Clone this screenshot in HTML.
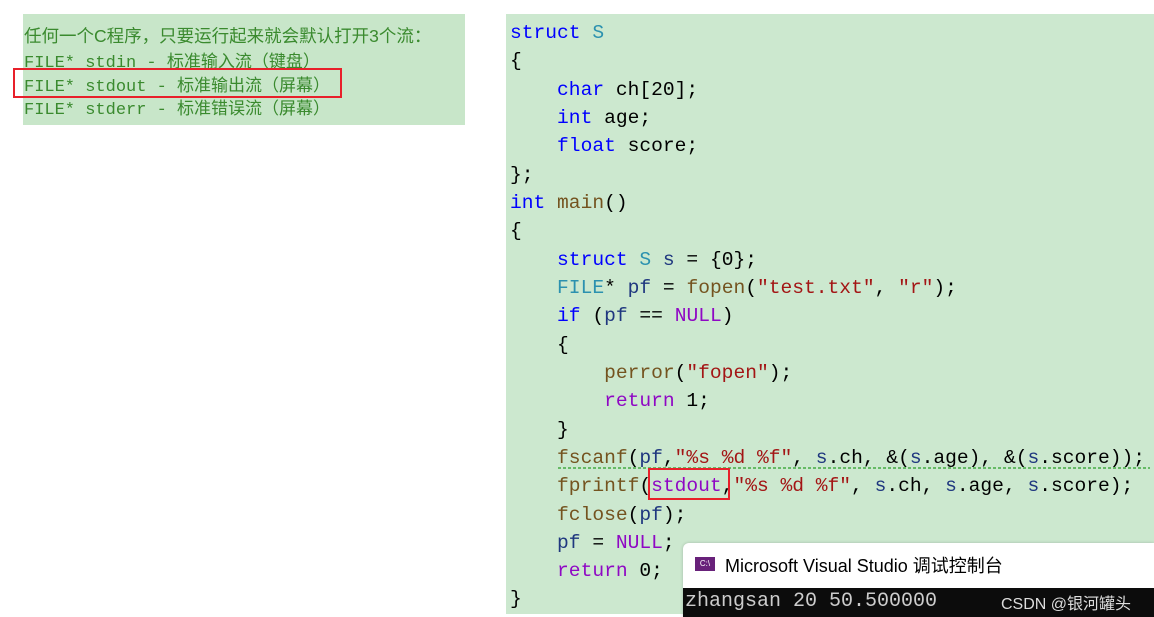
<!DOCTYPE html>
<html><head><meta charset="utf-8"><style>
body{margin:0;width:1154px;height:617px;background:#fff;position:relative;overflow:hidden;font-family:"Liberation Sans","Noto Sans CJK SC",sans-serif}
.note{position:absolute;left:23px;top:14px;width:442px;height:111px;background:#c8e6c9}
.note div{position:absolute;left:1px;font-size:17px;color:#3a8a2e;white-space:pre;font-family:"Liberation Mono","Noto Sans CJK SC",monospace}
.red1{position:absolute;left:13px;top:68px;width:325px;height:26px;border:2px solid #e8202a}
.code{position:absolute;left:506px;top:14px;width:648px;height:600px;background:#cce8cf}
.ln{position:absolute;left:4px;font-family:"Liberation Mono","DejaVu Sans Mono",monospace;font-size:19.6px;white-space:pre;color:#000;line-height:28px}
.k{color:#0000ff}.t{color:#2b91af}.f{color:#74531f}.s{color:#a31515}.v{color:#1f377f}.m{color:#8f08c4}
.box2{position:absolute;left:648px;top:468px;width:78px;height:28px;border:2px solid #e8202a}
.wave{position:absolute;left:558px;top:467px;width:592px;height:2px;background:repeating-linear-gradient(90deg,#4cae4c 0 3px,transparent 3px 5px);opacity:.8}
.con{position:absolute;left:683px;top:543px;width:471px;height:74px;background:#fff;border-top-left-radius:6px;box-shadow:0 0 3px rgba(0,0,0,.2)}
.ico{position:absolute;left:12px;top:14px;width:20px;height:14px;background:#68217a;color:#fff;font-size:8px;line-height:14px;text-align:center}
.ttl{position:absolute;left:42px;top:9px;font-size:18px;color:#000}
.blk{position:absolute;left:0;top:45px;width:471px;height:29px;background:#0c0c0c}
.out{position:absolute;left:2px;top:2px;font-family:"Liberation Mono",monospace;font-size:20px;color:#ccc}
.wm{position:absolute;left:318px;top:2px;font-size:16px;color:#ddd}
</style></head><body>
<div class="note">
<div style="top:9px;font-size:17.5px;font-family:'Liberation Sans','Noto Sans CJK SC',sans-serif">任何一个C程序，只要运行起来就会默认打开3个流：</div>
<div style="top:33px">FILE* stdin - 标准输入流（键盘）</div>
<div style="top:57px">FILE* stdout - 标准输出流（屏幕）</div>
<div style="top:80px">FILE* stderr - 标准错误流（屏幕）</div>
</div>
<div class="red1"></div>
<div class="code">
<div class="ln" style="top:5px"><span class="k">struct</span> <span class="t">S</span></div>
<div class="ln" style="top:33px">{</div>
<div class="ln" style="top:62px">    <span class="k">char</span> ch[20];</div>
<div class="ln" style="top:90px">    <span class="k">int</span> age;</div>
<div class="ln" style="top:118px">    <span class="k">float</span> score;</div>
<div class="ln" style="top:147px">};</div>
<div class="ln" style="top:175px"><span class="k">int</span> <span class="f">main</span>()</div>
<div class="ln" style="top:203px">{</div>
<div class="ln" style="top:232px">    <span class="k">struct</span> <span class="t">S</span> <span class="v">s</span> = {0};</div>
<div class="ln" style="top:260px">    <span class="t">FILE</span>* <span class="v">pf</span> = <span class="f">fopen</span>(<span class="s">"test.txt"</span>, <span class="s">"r"</span>);</div>
<div class="ln" style="top:288px">    <span class="k">if</span> (<span class="v">pf</span> == <span class="m">NULL</span>)</div>
<div class="ln" style="top:317px">    {</div>
<div class="ln" style="top:345px">        <span class="f">perror</span>(<span class="s">"fopen"</span>);</div>
<div class="ln" style="top:373px">        <span class="m">return</span> 1;</div>
<div class="ln" style="top:402px">    }</div>
<div class="ln" style="top:430px">    <span class="f">fscanf</span>(<span class="v">pf</span>,<span class="s">"%s %d %f"</span>, <span class="v">s</span>.ch, &amp;(<span class="v">s</span>.age), &amp;(<span class="v">s</span>.score));</div>
<div class="ln" style="top:458px">    <span class="f">fprintf</span>(<span class="m">stdout</span>,<span class="s">"%s %d %f"</span>, <span class="v">s</span>.ch, <span class="v">s</span>.age, <span class="v">s</span>.score);</div>
<div class="ln" style="top:487px">    <span class="f">fclose</span>(<span class="v">pf</span>);</div>
<div class="ln" style="top:515px">    <span class="v">pf</span> = <span class="m">NULL</span>;</div>
<div class="ln" style="top:543px">    <span class="m">return</span> 0;</div>
<div class="ln" style="top:571px">}</div>
</div>
<div class="wave"></div>
<div class="box2"></div>
<div class="con"><div class="ico">C:\</div><div class="ttl">Microsoft Visual Studio 调试控制台</div>
<div class="blk"><div class="out">zhangsan 20 50.500000</div><div class="wm">CSDN @银河罐头</div></div></div>
</body></html>
